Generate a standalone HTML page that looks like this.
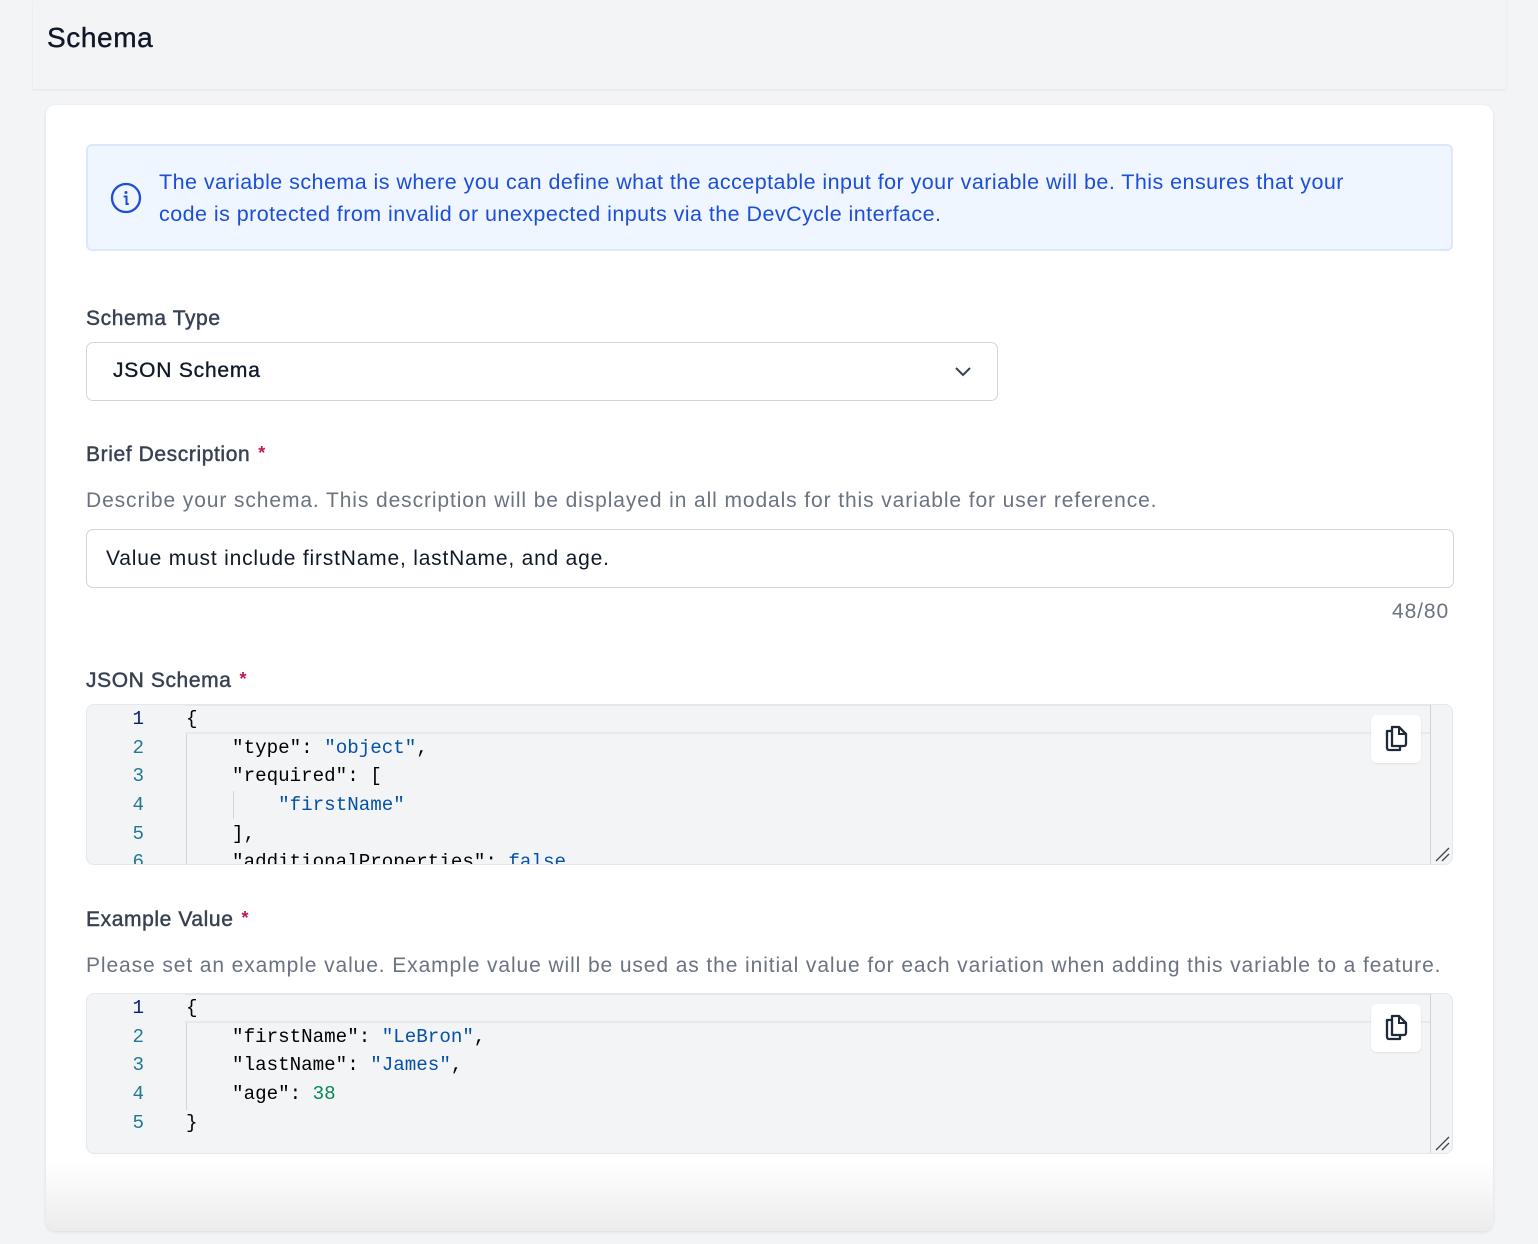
<!DOCTYPE html>
<html><head><meta charset="utf-8"><style>
*{box-sizing:border-box;margin:0;padding:0}
body{width:1538px;height:1244px;background:#f3f4f6;font-family:"Liberation Sans",sans-serif;position:relative;overflow:hidden}
.hdr{position:absolute;left:33px;top:0;width:1473px;height:89px;background:#f3f4f6;box-shadow:0 1px 2px rgba(0,0,0,.08)}
.hdr h1{position:absolute;left:14px;top:22px;font-size:28px;font-weight:500;color:#111827;letter-spacing:.6px;-webkit-text-stroke:.4px #111827}
.card{position:absolute;left:46px;top:105px;width:1447px;height:1126px;background:#fff;border-radius:10px;box-shadow:0 1px 3px rgba(0,0,0,.1);overflow:hidden}
.card:after{content:"";position:absolute;left:0;right:0;bottom:0;height:70px;background:linear-gradient(#fff0,#ececec)}
.info{position:absolute;left:40px;top:39px;width:1367px;height:107px;background:#eff6ff;border:2px solid #dbe7fb;border-radius:6px}
.info p{position:absolute;left:71px;top:20px;font-size:21.5px;line-height:32px;color:#1d4ed8;width:1215px;letter-spacing:.45px}
.info svg{position:absolute;left:22px;top:36px}
.lbl{position:absolute;left:40px;font-size:21px;color:#374151;letter-spacing:.6px;-webkit-text-stroke:.45px #374151}
.lbl b{color:#be185d;font-weight:700;margin-left:8px;font-size:18px;vertical-align:top;-webkit-text-stroke:0}
.hint{position:absolute;left:40px;font-size:21px;color:#6b7280;letter-spacing:.9px}
.box{position:absolute;left:40px;border:1.5px solid #d1d5db;border-radius:7px;background:#fff;font-size:21px;color:#111827;letter-spacing:.8px}
.ed{position:absolute;left:40px;width:1367px;height:161px;background:#f3f4f6;border:1px solid #e5e7eb;border-radius:8px;overflow:hidden;font-family:"Liberation Mono",monospace;font-size:19.2px}
.ln{position:absolute;left:0;width:57px;text-align:right;color:#237893}
.ln.a{color:#0b216f}
.cd{position:absolute;left:99px;white-space:pre;color:#000}
.s{color:#0451a5}.n{color:#098658}
.curl{position:absolute;left:98px;top:0;width:1246px;height:29px;border-top:1px solid #e6e7ea;border-bottom:2px solid #e8e9ec}
.guide{position:absolute;width:1px;background:#d4d4d4}
.sb{position:absolute;right:0;top:0;width:22px;height:100%;border-left:1px solid #cfd1d4}
.cp{position:absolute;left:1284px;top:10px;width:50px;height:48px;background:#fff;border-radius:6px;box-shadow:0 1px 2px rgba(0,0,0,.08)}
.cp svg{position:absolute;left:12px;top:10px}
.rs{position:absolute;right:2px;bottom:2px}
</style></head><body>
<div class="hdr"><h1>Schema</h1></div>
<div class="card">
<div class="info">
<svg width="32" height="32" viewBox="0 0 32 32"><circle cx="16" cy="16" r="14" fill="none" stroke="#1d4ed8" stroke-width="2.3"/><circle cx="16" cy="10.5" r="1.5" fill="#1d4ed8"/><path d="M14.5 14.5h2v7.5h1.5" fill="none" stroke="#1d4ed8" stroke-width="2" stroke-linecap="round"/></svg>
<p>The variable schema is where you can define what the acceptable input for your variable will be. This ensures that your code is protected from invalid or unexpected inputs via the DevCycle interface.</p>
</div>
<div class="lbl" style="top:202px">Schema Type</div>
<div class="box" style="top:237px;width:912px;height:59px"><span style="position:absolute;left:26px;top:16px;-webkit-text-stroke:.35px #111827">JSON Schema</span>
<svg style="position:absolute;left:866px;top:22px" width="20" height="14" viewBox="0 0 20 14"><path d="M3 3l7 7 7-7" fill="none" stroke="#374151" stroke-width="2"/></svg></div>
<div class="lbl" style="top:338px">Brief Description<b>*</b></div>
<div class="hint" style="top:384px">Describe your schema. This description will be displayed in all modals for this variable for user reference.</div>
<div class="box" style="top:424px;width:1368px;height:59px"><span style="position:absolute;left:19px;top:17px">Value must include firstName, lastName, and age.</span></div>
<div class="hint" style="top:495px;left:1346px">48/80</div>
<div class="lbl" style="top:564px">JSON Schema<b>*</b></div>
<div class="ed" style="top:599px">
<div class="curl"></div>
<div class="guide" style="left:99px;top:29px;height:140px"></div>
<div class="guide" style="left:146px;top:86px;height:28px"></div>
<div class="ln a" style="top:3px">1</div><div class="cd" style="top:3px">{</div>
<div class="ln" style="top:32px">2</div><div class="cd" style="top:32px">    "type": <span class="s">"object"</span>,</div>
<div class="ln" style="top:60px">3</div><div class="cd" style="top:60px">    "required": [</div>
<div class="ln" style="top:89px">4</div><div class="cd" style="top:89px">        <span class="s">"firstName"</span></div>
<div class="ln" style="top:118px">5</div><div class="cd" style="top:118px">    ],</div>
<div class="ln" style="top:146px">6</div><div class="cd" style="top:146px">    "additionalProperties": <span class="s">false</span></div>
<div class="sb"></div>
<div class="cp"><svg width="26" height="28" viewBox="0 0 26 28"><path d="M9 6H4v17c0 1 1 2 2 2h11v-4" fill="none" stroke="#1f2937" stroke-width="2.3" stroke-linejoin="round"/><path d="M9 2h7l7 7v10c0 1-1 2-2 2H9z" fill="none" stroke="#1f2937" stroke-width="2.3" stroke-linejoin="round"/><path d="M16 2v7h7" fill="none" stroke="#1f2937" stroke-width="2"/></svg></div>
<svg class="rs" width="16" height="16" viewBox="0 0 16 16"><path d="M2 15L15 2M8 15l7-7" stroke="#444" stroke-width="1.3"/></svg>
</div>
<div class="lbl" style="top:803px">Example Value<b>*</b></div>
<div class="hint" style="top:849px">Please set an example value. Example value will be used as the initial value for each variation when adding this variable to a feature.</div>
<div class="ed" style="top:888px">
<div class="curl"></div>
<div class="guide" style="left:99px;top:29px;height:87px"></div>
<div class="ln a" style="top:3px">1</div><div class="cd" style="top:3px">{</div>
<div class="ln" style="top:32px">2</div><div class="cd" style="top:32px">    "firstName": <span class="s">"LeBron"</span>,</div>
<div class="ln" style="top:60px">3</div><div class="cd" style="top:60px">    "lastName": <span class="s">"James"</span>,</div>
<div class="ln" style="top:89px">4</div><div class="cd" style="top:89px">    "age": <span class="n">38</span></div>
<div class="ln" style="top:118px">5</div><div class="cd" style="top:118px">}</div>
<div class="sb"></div>
<div class="cp"><svg width="26" height="28" viewBox="0 0 26 28"><path d="M9 6H4v17c0 1 1 2 2 2h11v-4" fill="none" stroke="#1f2937" stroke-width="2.3" stroke-linejoin="round"/><path d="M9 2h7l7 7v10c0 1-1 2-2 2H9z" fill="none" stroke="#1f2937" stroke-width="2.3" stroke-linejoin="round"/><path d="M16 2v7h7" fill="none" stroke="#1f2937" stroke-width="2"/></svg></div>
<svg class="rs" width="16" height="16" viewBox="0 0 16 16"><path d="M2 15L15 2M8 15l7-7" stroke="#444" stroke-width="1.3"/></svg>
</div>
</div>
</body></html>
